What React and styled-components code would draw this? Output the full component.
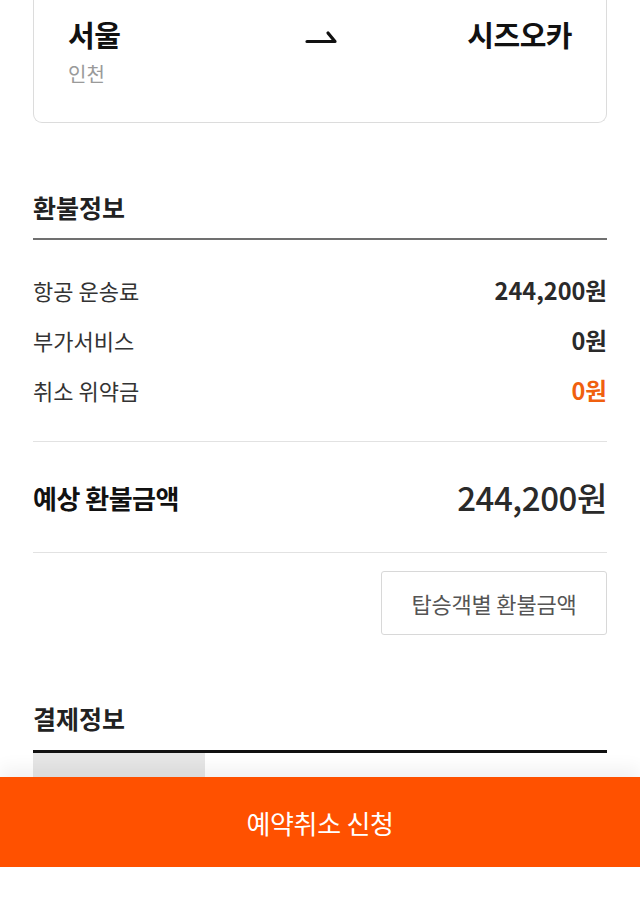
import React from 'react';
import styled, { createGlobalStyle } from 'styled-components';

const GlobalStyle = createGlobalStyle`
  html, body {
    margin: 0;
    padding: 0;
    background: #fff;
  }
  body {
    font-family: "Noto Sans CJK KR", "Noto Sans", sans-serif;
    color: #222;
  }
`;

const Page = styled.div`
  width: 640px;
  min-height: 924px;
  padding: 0 33px 160px;
  box-sizing: border-box;
`;

const RouteCard = styled.div`
  height: 123px;
  box-sizing: border-box;
  border: 1px solid #dcdcdc;
  border-top: none;
  border-radius: 0 0 9px 9px;
  padding: 13px 34px 0 34px;
  display: grid;
  grid-template-columns: 1fr auto 1fr;
  align-items: start;
`;

const City = styled.div`
  display: flex;
  flex-direction: column;
  align-items: ${({ $right }) => ($right ? 'flex-end' : 'flex-start')};
`;

const CityName = styled.div`
  font-size: 29px;
  font-weight: 700;
  line-height: 42px;
  color: #111;
  letter-spacing: -0.5px;
`;

const Airport = styled.div`
  font-size: 20px;
  line-height: 28px;
  color: #9a9a9a;
  margin-top: 5px;
`;

const ArrowWrap = styled.div`
  padding-top: 13px;
  padding-left: 4px;
`;

const SectionTitle = styled.h2`
  margin: 0;
  font-size: 25px;
  font-weight: 700;
  line-height: 34px;
  color: #222;
  padding-top: ${({ $top }) => $top}px;
  padding-bottom: ${({ $bottom }) => $bottom}px;
  border-bottom: ${({ $dark }) => ($dark ? '3px solid #111' : '2px solid #707070')};
`;

const Rows = styled.div`
  display: flex;
  flex-direction: column;
  gap: 21px;
  padding: 36px 0 36px;
  border-bottom: 1px solid #e2e2e2;
`;

const Row = styled.div`
  display: flex;
  justify-content: space-between;
  align-items: center;
  line-height: 29px;
`;

const Label = styled.span`
  font-size: 22px;
  color: #333;
`;

const Value = styled.span`
  font-size: 23.5px;
  font-weight: 700;
  color: ${({ $accent }) => ($accent ? '#f0600f' : '#2a2a2a')};
  letter-spacing: 0;
`;

const TotalRow = styled.div`
  display: flex;
  justify-content: space-between;
  align-items: center;
  height: 110px;
  border-bottom: 1px solid #e2e2e2;
`;

const TotalLabel = styled.span`
  font-size: 26px;
  font-weight: 700;
  color: #111;
  letter-spacing: -0.5px;
`;

const TotalValue = styled.span`
  font-size: 33px;
  font-weight: 500;
  color: #2a2a2a;
  letter-spacing: -0.4px;
`;

const ButtonRow = styled.div`
  display: flex;
  justify-content: flex-end;
  padding-top: 18px;
`;

const OutlineButton = styled.button`
  width: 226px;
  height: 64px;
  border: 1px solid #d8d8d8;
  border-radius: 3px;
  background: #fff;
  font-family: inherit;
  font-size: 22px;
  color: #555;
  letter-spacing: -0.2px;
`;

const Placeholder = styled.div`
  width: 172px;
  height: 30px;
  background: #e6e6e6;
`;

const Footer = styled.div`
  position: fixed;
  left: 0;
  right: 0;
  bottom: 0;
  background: #fff;
  padding-bottom: 57px;
  box-shadow: 0 -10px 16px rgba(0, 0, 0, 0.05);
`;

const SubmitButton = styled.button`
  display: block;
  width: 100%;
  height: 90px;
  border: none;
  background: #ff5100;
  color: #fff;
  font-family: inherit;
  font-size: 26px;
  letter-spacing: -0.3px;
`;

const HalfArrow = () => (
  <svg width="34" height="16" viewBox="0 0 34 16">
    <path
      d="M2 12.5 H30 L23 4"
      fill="none"
      stroke="#111"
      strokeWidth="3.2"
      strokeLinecap="round"
      strokeLinejoin="round"
    />
  </svg>
);

const charges = [
  { label: '항공 운송료', value: '244,200원' },
  { label: '부가서비스', value: '0원' },
  { label: '취소 위약금', value: '0원', accent: true },
];

export default function App() {
  return (
    <>
      <GlobalStyle />
      <Page>
        <RouteCard>
          <City>
            <CityName>서울</CityName>
            <Airport>인천</Airport>
          </City>
          <ArrowWrap>
            <HalfArrow />
          </ArrowWrap>
          <City $right>
            <CityName>시즈오카</CityName>
          </City>
        </RouteCard>

        <SectionTitle $top={67} $bottom={14}>환불정보</SectionTitle>
        <Rows>
          {charges.map((c) => (
            <Row key={c.label}>
              <Label>{c.label}</Label>
              <Value $accent={c.accent}>{c.value}</Value>
            </Row>
          ))}
        </Rows>

        <TotalRow>
          <TotalLabel>예상 환불금액</TotalLabel>
          <TotalValue>244,200원</TotalValue>
        </TotalRow>

        <ButtonRow>
          <OutlineButton>탑승객별 환불금액</OutlineButton>
        </ButtonRow>

        <SectionTitle $top={66} $bottom={15} $dark>결제정보</SectionTitle>
        <Placeholder />
      </Page>
      <Footer>
        <SubmitButton>예약취소 신청</SubmitButton>
      </Footer>
    </>
  );
}
